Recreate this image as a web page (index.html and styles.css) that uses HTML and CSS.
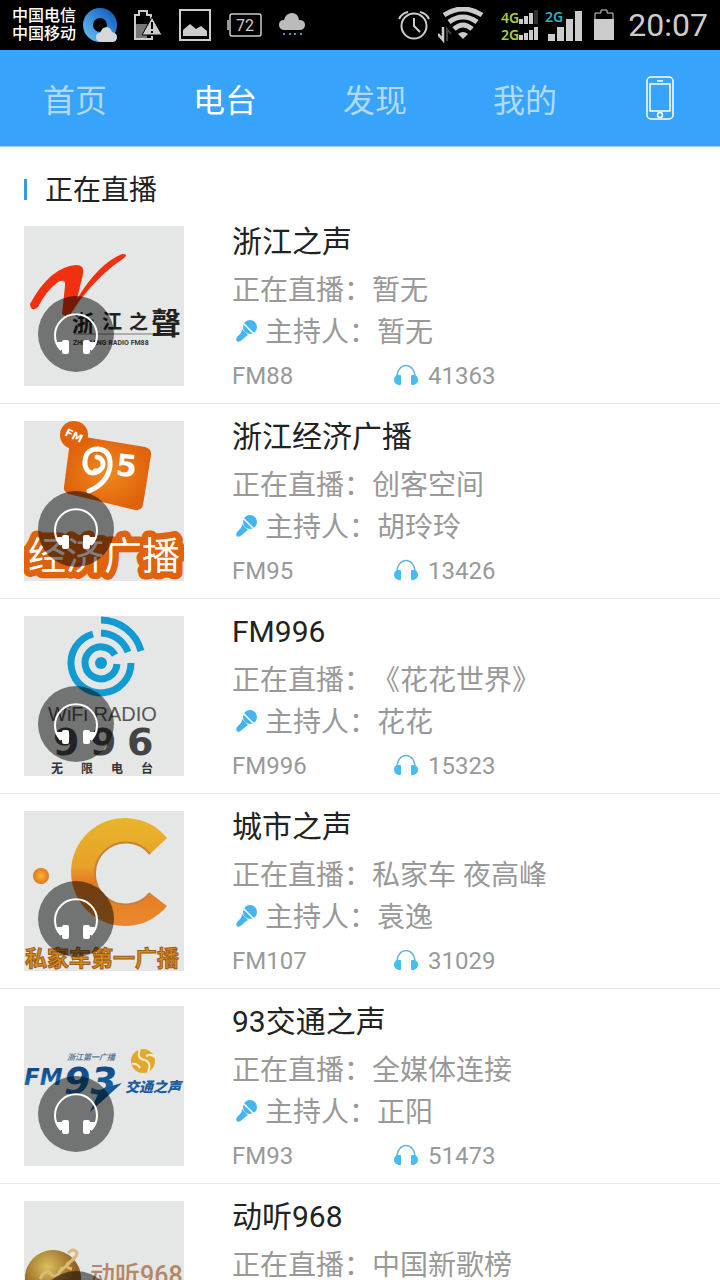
FILE: index.html
```html
<!DOCTYPE html>
<html lang="zh-CN">
<head>
  <meta charset="UTF-8">
  <meta name="viewport" content="width=device-width, initial-scale=1.0">
  <title>电台</title>
  <link rel="stylesheet" href="styles.css">
</head>
<body>
  <!-- shared icons -->
  <svg class="defs" width="0" height="0" aria-hidden="true">
    <symbol id="headset" viewBox="0 0 76 76">
      <path d="M23 54 A21 21 0 1 1 53 54" fill="none" stroke="#fff" stroke-width="2"/>
      <path d="M18 46 H25 V54 H22 Q19 51 18 46Z M58 46 H51 V54 H54 Q57 51 58 46Z" fill="#fff"/>
      <rect x="24" y="44" width="7" height="14" rx="2" fill="#fff"/>
      <rect x="45" y="44" width="7" height="14" rx="2" fill="#fff"/>
    </symbol>
    <symbol id="phones" viewBox="0 0 24 22">
      <path d="M3 15 C2 -3 22 -3 21 15" fill="none" stroke="#69b4e0" stroke-width="1.6"/>
      <path d="M5 11 V21 Q0 20 0 16 Q0 11 5 11Z M19 11 V21 Q24 20 24 16 Q24 11 19 11Z" fill="#45bdf0"/>
      <rect x="4" y="11" width="3" height="10" rx="1" fill="#45bdf0"/>
      <rect x="17" y="11" width="3" height="10" rx="1" fill="#45bdf0"/>
    </symbol>
    <symbol id="mic" viewBox="0 0 24 24">
      <circle cx="15" cy="7" r="7" fill="#45b4f0"/>
      <path d="M7 9 L13 15 Q10 17 8 19 Q5 22 3 22 L1 20 Q2 16 5 14 Q7 12 7 9Z" fill="#45b4f0"/>
      <path d="M8 3 L20 15" stroke="#fff" stroke-width="1.5"/>
    </symbol>
  </svg>

  <div class="app">
    <header class="status">
      <div class="carrier">中国电信<br>中国移动</div>
      <div class="status-left">
        <svg width="35" height="36" viewBox="0 0 35 36">
          <defs>
            <linearGradient id="ring" x1="0" y1="1" x2="1" y2="0">
              <stop offset="0" stop-color="#5eb4ec"/><stop offset="1" stop-color="#1565c4"/>
            </linearGradient>
          </defs>
          <circle cx="18" cy="18" r="12" fill="none" stroke="url(#ring)" stroke-width="10"/>
          <path d="M20 35 Q14 35 14 30 Q14 26 18 26 Q20 20 25 20 Q29 21 30 25 Q35 26 35 30 Q35 35 30 35Z" fill="#d4d8da"/>
        </svg>
        <svg width="30" height="36" viewBox="0 0 30 36">
          <path d="M12 32 H2 V8 H6 V4 H14 V8 H18 V12" fill="none" stroke="#ccc" stroke-width="2"/>
          <rect x="3" y="17" width="11" height="14" fill="#777"/>
          <path d="M19 10 L29 28 H9Z" fill="#ccc" stroke="#000"/>
          <path d="M8 32 H19 V29" fill="none" stroke="#ccc" stroke-width="2"/>
          <path d="M19 15 V22 M19 24 V26" stroke="#000" stroke-width="2"/>
        </svg>
        <svg width="32" height="36" viewBox="0 0 32 36">
          <rect x="1" y="3" width="30" height="30" fill="none" stroke="#ccc" stroke-width="2"/>
          <path d="M4 29 V23 L11 17 L17 22 L22 19 L28 24 V29Z" fill="#ccc"/>
        </svg>
        <svg width="35" height="36" viewBox="0 0 35 36">
          <rect x="3" y="7" width="31" height="22" rx="2" fill="none" stroke="#ccc" stroke-width="1.5"/>
          <path d="M1 13 V23" stroke="#ccc" stroke-width="1.5"/>
          <text x="9" y="24" font-size="16" fill="#ccc">72</text>
        </svg>
        <svg width="27" height="36" viewBox="0 0 27 36">
          <path d="M7 23 Q1 23 1 18 Q1 13 6 13 Q8 6 14 6 Q20 6 21 13 Q27 13 27 18 Q27 23 21 23Z" fill="#bbb"/>
          <path d="M5 27 h2 M11 27 h2 M16 27 h2 M22 27 h2" stroke="#4b94c4" stroke-width="2"/>
        </svg>
      </div>
      <div class="status-right">
        <svg width="32" height="36" viewBox="0 0 32 36">
          <circle cx="16" cy="19" r="12.5" fill="none" stroke="#ccc" stroke-width="2"/>
          <path d="M16 11 V19 L22 25 M1 12 Q4 6 10 5 M31 12 Q28 6 22 5" fill="none" stroke="#ccc" stroke-width="2"/>
        </svg>
        <svg width="55" height="36" viewBox="0 0 55 36">
          <path d="M6 8 Q25 -4 44 8 M11 15 Q25 5 39 15 M16 22 Q25 14 34 22" fill="none" stroke="#ccc" stroke-width="5"/>
          <path d="M20 27 Q25 23 30 27 L25 32Z" fill="#ccc"/>
          <path d="M5 20 V33 L0 27" fill="none" stroke="#ccc" stroke-width="2.5"/>
          <path d="M9 34 V22 L13 27" fill="none" stroke="#444" stroke-width="2"/>
        </svg>
        <svg width="85" height="36" viewBox="0 0 85 36">
          <text class="net" x="0" y="16" fill="#a5cf42">4G</text>
          <text class="net" x="0" y="33" fill="#a5cf42">2G</text>
          <text class="net" x="44" y="15" fill="#2fb1bd">2G</text>
          <path d="M18 17 v-5 h4 v5z M23 17 v-8 h4 v8z M28 17 v-11 h4 v11z M18 33 v-5 h4 v5z M23 33 v-7 h4 v7z M28 33 v-10 h4 v10z M33 33 v-13 h4 v13z" fill="#ccc"/>
          <path d="M33 17 v-14 h4 v14z" fill="#333"/>
          <path d="M47 34 v-7 h7 v7z M56 34 v-14 h7 v14z M65 34 v-22 h7 v22z M74 34 v-30 h7 v30z" fill="#ccc"/>
        </svg>
        <svg width="26" height="36" viewBox="0 0 26 36">
          <path d="M1 13 V6 H7 V3 H13 V6 H19 V13" fill="none" stroke="#ccc"/>
          <rect y="12" width="20" height="21" fill="#ccc"/>
        </svg>
        <time>20:07</time>
      </div>
    </header>

    <nav class="tabs">
      <a href="#">首页</a>
      <a href="#" class="active">电台</a>
      <a href="#">发现</a>
      <a href="#">我的</a>
      <a href="#" class="device" aria-label="手机">
        <svg width="28" height="44" viewBox="0 0 28 44" fill="none" stroke="#fff" stroke-width="1.5">
          <rect x="1" y="1" width="26" height="42" rx="4"/>
          <rect x="4" y="8" width="20" height="27"/>
          <path d="M11 5 H17"/>
          <circle cx="14" cy="39" r="2.5"/>
        </svg>
      </a>
    </nav>

    <main class="content">
      <h1>正在直播</h1>
      <ul class="stations">
        <li class="station">
          <div class="cover">
            <svg viewBox="0 0 160 160">
              <path d="M6 78 Q26 41 52 39 Q61 39 59 48 L53 73 Q74 38 98 28 Q105 28 100 32 Q78 46 56 74 L44 92 L38 88 L41 60 Q42 52 34 56 Q22 65 14 81 Q7 87 6 78Z" fill="#f1300f"/>
              <g class="brush" fill="#222">
                <text x="48" y="105" font-size="22">浙</text>
                <text x="78" y="103" font-size="20">江</text>
                <text x="105" y="103" font-size="19">之</text>
                <text x="127" y="108" font-size="30">聲</text>
              </g>
              <path d="M50 108 H128" stroke="#777"/>
              <text x="49" y="119" font-size="7" font-weight="bold" fill="#333">ZHEJIANG RADIO FM88</text>
            </svg>
            <button class="play" aria-label="播放"><svg><use href="#headset"/></svg></button>
          </div>
          <div class="info">
            <h2>浙江之声</h2>
            <p>正在直播：暂无</p>
            <p class="host"><svg><use href="#mic"/></svg>主持人：暂无</p>
            <div class="meta"><span>FM88</span><svg><use href="#phones"/></svg><span>41363</span></div>
          </div>
        </li>

        <li class="station">
          <div class="cover">
            <svg viewBox="0 0 160 160">
              <defs>
                <radialGradient id="orange"><stop offset="0" stop-color="#f08a1c"/><stop offset="1" stop-color="#e0620c"/></radialGradient>
              </defs>
              <circle cx="50" cy="14" r="14" fill="#e0620c"/>
              <path d="M49 14 L121 26 Q128 28 127 34 L119 84 Q117 90 111 89 L45 73 Q39 71 40 66 L46 20Z" fill="url(#orange)"/>
              <text class="wide" x="40" y="14" font-size="11" fill="#fff" transform="rotate(26 40 14)">FM</text>
              <path d="M71 50 A7 7 0 1 0 73 36 M75 50 Q64 56 61 44 Q60 28 74 28 Q87 29 86 45 Q84 62 65 70" fill="none" stroke="#fff" stroke-width="5" stroke-linecap="round"/>
              <text class="wide" x="91" y="54" font-size="30" fill="#fff" transform="rotate(6 91 54)">5</text>
              <text x="4" y="148" font-size="38" fill="#fff" stroke="#e0620c" stroke-width="13" stroke-linejoin="round" paint-order="stroke">经济广播</text>
            </svg>
            <button class="play" aria-label="播放"><svg><use href="#headset"/></svg></button>
          </div>
          <div class="info">
            <h2>浙江经济广播</h2>
            <p>正在直播：创客空间</p>
            <p class="host"><svg><use href="#mic"/></svg>主持人：胡玲玲</p>
            <div class="meta"><span>FM95</span><svg><use href="#phones"/></svg><span>13426</span></div>
          </div>
        </li>

        <li class="station">
          <div class="cover">
            <svg viewBox="0 0 160 160">
              <circle cx="77" cy="47" r="6" fill="#129bd3"/>
              <g fill="none" stroke="#129bd3" stroke-width="7">
                <path d="M91 39 A16 16 0 1 0 93 48"/>
                <path d="M69 18 A30 30 0 1 0 107 47"/>
                <path d="M77 17 A30 30 0 0 1 104 36"/>
                <path d="M77 4 A42 42 0 0 1 117 35"/>
              </g>
              <text class="latin" x="24" y="105" font-size="20" fill="#555">WiFi RADIO</text>
              <g class="wide" font-size="38" fill="#444">
                <text x="29" y="139">9</text><text x="66" y="139">9</text><text x="103" y="139">6</text>
              </g>
              <g font-size="12" font-weight="bold" fill="#333">
                <text x="27" y="157">无</text><text x="57" y="157">限</text><text x="87" y="157">电</text><text x="117" y="157">台</text>
              </g>
            </svg>
            <button class="play" aria-label="播放"><svg><use href="#headset"/></svg></button>
          </div>
          <div class="info">
            <h2>FM996</h2>
            <p>正在直播：《花花世界》</p>
            <p class="host"><svg><use href="#mic"/></svg>主持人：花花</p>
            <div class="meta"><span>FM996</span><svg><use href="#phones"/></svg><span>15323</span></div>
          </div>
        </li>

        <li class="station">
          <div class="cover">
            <svg viewBox="0 0 160 160">
              <defs>
                <linearGradient id="amber" x1="0" y1="0" x2="0" y2="1">
                  <stop offset="0" stop-color="#e8b52c"/><stop offset="0.45" stop-color="#e8a028"/><stop offset="0.6" stop-color="#e57a20"/><stop offset="1" stop-color="#e98a2c"/>
                </linearGradient>
                <radialGradient id="bead"><stop offset="0" stop-color="#f8b83c"/><stop offset="1" stop-color="#e2761a"/></radialGradient>
              </defs>
              <path d="M143 27 A54 54 0 1 0 143 95 L126 82 A31 31 0 1 1 126 43Z" fill="url(#amber)"/>
              <path d="M126 82 A31 31 0 1 1 126 43" fill="none" stroke="#c98038" stroke-width="2"/>
              <circle cx="17" cy="65" r="8" fill="url(#bead)"/>
              <text x="1" y="155" font-size="22" font-weight="bold" fill="#dc8e1c" stroke="#9c5a14">私家车第一广播</text>
            </svg>
            <button class="play" aria-label="播放"><svg><use href="#headset"/></svg></button>
          </div>
          <div class="info">
            <h2>城市之声</h2>
            <p>正在直播：私家车 夜高峰</p>
            <p class="host"><svg><use href="#mic"/></svg>主持人：袁逸</p>
            <div class="meta"><span>FM107</span><svg><use href="#phones"/></svg><span>31029</span></div>
          </div>
        </li>

        <li class="station">
          <div class="cover">
            <svg viewBox="0 0 160 160">
              <defs>
                <linearGradient id="blue" x1="0" y1="0" x2="0" y2="1"><stop offset="0" stop-color="#123c78"/><stop offset="1" stop-color="#1879bd"/></linearGradient>
              </defs>
              <text x="43" y="54" font-size="8" font-weight="bold" font-style="italic" fill="#5d7c96">浙江第一广播</text>
              <g class="slant" fill="url(#blue)">
                <text x="0" y="79" font-size="23">FM</text>
                <text x="40" y="88" font-size="38">93</text>
              </g>
              <path d="M80 82 L98 77 L66 106 L74 88Z" fill="#145894"/>
              <circle cx="119" cy="55" r="12" fill="#e3a72b"/>
              <path d="M116 43 Q112 53 121 54 Q128 57 124 66 M122 50 Q128 47 132 52 M108 58 Q113 57 116 62" fill="none" stroke="#f3ecd6" stroke-width="2"/>
              <text x="101" y="86" font-size="14" font-weight="900" font-style="italic" fill="#1a5c9c">交通之声</text>
            </svg>
            <button class="play" aria-label="播放"><svg><use href="#headset"/></svg></button>
          </div>
          <div class="info">
            <h2>93交通之声</h2>
            <p>正在直播：全媒体连接</p>
            <p class="host"><svg><use href="#mic"/></svg>主持人：正阳</p>
            <div class="meta"><span>FM93</span><svg><use href="#phones"/></svg><span>51473</span></div>
          </div>
        </li>

        <li class="station">
          <div class="cover">
            <svg viewBox="0 0 160 160">
              <defs>
                <radialGradient id="gold" cx="0.4" cy="0.3"><stop offset="0" stop-color="#dcc05c"/><stop offset="1" stop-color="#936222"/></radialGradient>
              </defs>
              <circle cx="29" cy="77" r="28" fill="url(#gold)"/>
              <path d="M16 78 Q22 66 28 74 Q34 78 38 66 M34 72 Q44 64 51 56 M44 52 Q50 46 53 52 Q52 58 44 62 Q40 66 48 68" fill="none" stroke="#ddb978" stroke-width="3"/>
              <text x="66" y="83" font-size="25" font-weight="500" fill="#b58665">动听968</text>
            </svg>
            <button class="play" aria-label="播放"><svg><use href="#headset"/></svg></button>
          </div>
          <div class="info">
            <h2>动听968</h2>
            <p>正在直播：中国新歌榜</p>
          </div>
        </li>
      </ul>
    </main>
  </div>
</body>
</html>
```

FILE: styles.css
```css
* {
  box-sizing: border-box;
  margin: 0;
  padding: 0;
}

body {
  font-family: Roboto, "Noto Sans CJK SC", sans-serif;
  background: #fff;
  color: #222;
  text-spacing-trim: space-all;
}

a {
  color: inherit;
  text-decoration: none;
}

svg {
  display: block;
  flex-shrink: 0;
}

.defs {
  position: absolute;
}

.app {
  display: flex;
  flex-direction: column;
  height: 100vh;
  overflow: hidden;
}

/* status bar */
.status {
  display: flex;
  align-items: center;
  gap: 6px;
  height: 50px;
  flex-shrink: 0;
  padding: 0 12px;
  background: #000;
  color: #ccc;
}

.carrier {
  font-size: 16px;
  line-height: 18px;
  font-weight: 500;
  color: #fff;
  white-space: nowrap;
}

.status-left {
  display: flex;
  gap: 16px;
}

.status-right {
  display: flex;
  align-items: center;
  gap: 8px;
  margin-left: auto;
}

.status-right time {
  font-size: 32px;
  line-height: 36px;
}

.net {
  font-family: "Noto Sans", sans-serif;
  font-size: 14px;
  font-weight: 600;
}

/* tabs */
.tabs {
  display: flex;
  height: 97px;
  flex-shrink: 0;
  padding-bottom: 1px;
  background: #38a3fb;
  border-bottom: 1px solid #9fcdf3;
  color: #b0dafd;
  font-size: 32px;
}

.tabs a {
  flex: 5;
  display: flex;
  align-items: center;
  justify-content: center;
}

.tabs .active {
  color: #fff;
}

.tabs .device {
  flex: 4;
}

/* list */
.content {
  flex: 1;
  min-height: 0;
  overflow: hidden;
}

h1 {
  display: flex;
  align-items: center;
  gap: 18px;
  padding: 26px 24px 0;
  font-size: 28px;
  line-height: 36px;
  font-weight: normal;
}

h1::before {
  content: "";
  width: 3px;
  height: 21px;
  margin-bottom: 3px;
  background: #3a9bd6;
}

.stations {
  list-style: none;
}

.station {
  display: flex;
  align-items: flex-start;
  gap: 48px;
  padding: 17px 24px 12px;
  border-bottom: 1px solid #e6e6e6;
}

.cover {
  position: relative;
  width: 160px;
  height: 160px;
  flex-shrink: 0;
  background: #e5e6e6;
}

.cover > svg {
  width: 100%;
  height: 100%;
}

/* headphone button over the cover */
.play {
  position: absolute;
  left: 14px;
  top: 70px;
  width: 76px;
  height: 76px;
  border: none;
  border-radius: 50%;
  background: rgba(0, 0, 0, 0.5);
  cursor: pointer;
}

.play svg {
  width: 76px;
  height: 76px;
}

.info {
  flex: 1;
  min-width: 0;
  color: #999;
  font-size: 28px;
  line-height: 42px;
}

.info h2 {
  margin-bottom: 12px;
  font-size: 30px;
  line-height: 32px;
  font-weight: normal;
  color: #222;
}

.host {
  display: flex;
  align-items: center;
}

.host svg {
  width: 24px;
  height: 24px;
  margin: 0 6px 2px 3px;
}

.meta {
  display: flex;
  align-items: center;
  margin-top: 7px;
  font-size: 24px;
  line-height: 30px;
}

.meta span:first-child {
  width: 162px;
}

.meta svg {
  width: 24px;
  height: 22px;
  margin: 0 10px 2px 0;
}

/* logo lettering */
.brush {
  font-family: "Noto Sans CJK TC", serif;
  font-weight: bold;
}

.latin {
  font-family: "Liberation Sans", sans-serif;
}

.wide {
  font-family: "DejaVu Sans", sans-serif;
  font-weight: bold;
}

.slant {
  font-family: "DejaVu Sans", sans-serif;
  font-weight: bold;
  font-style: italic;
}
```
